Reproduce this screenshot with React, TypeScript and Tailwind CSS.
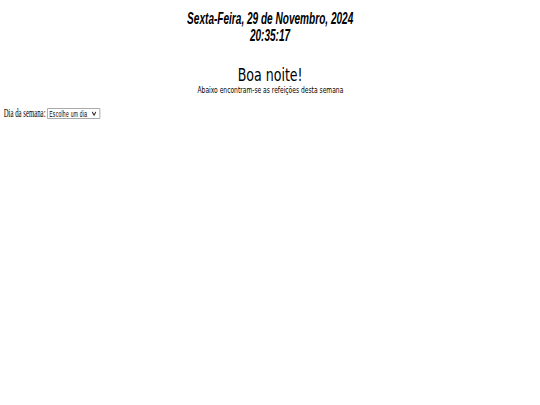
import React from "react";

export default function App() {
  return (
    <div className="min-h-screen w-full overflow-hidden bg-white text-black">
      <div className="pt-[10px] text-center font-['Liberation_Sans',Arial,sans-serif] text-[16.5px] leading-[16.5px] font-bold italic">
        <div>
          <span className="inline-block scale-x-[0.61] whitespace-nowrap">Sexta-Feira, 29 de Novembro, 2024</span>
        </div>
        <div>
          <span className="inline-block scale-x-[0.61] whitespace-nowrap">20:35:17</span>
        </div>
      </div>

      <div className="mt-[22px] text-center font-['DejaVu_Sans',sans-serif]">
        <div className="text-[17.5px] leading-[20px]">
          <span className="inline-block scale-x-[0.72] whitespace-nowrap">Boa noite!</span>
        </div>
        <div className="text-[8.5px] leading-[10px]">
          <span className="inline-block scale-x-[0.705] whitespace-nowrap">Abaixo encontram-se as refeições desta semana</span>
        </div>
      </div>

      <div className="mt-[12.6px] flex h-[11px] items-center origin-left scale-x-[0.53] pl-[7px]">
        <label className="block font-['Liberation_Serif','Times_New_Roman',serif] text-[12.8px] leading-[11px] whitespace-nowrap">
          Dia da semana:
        </label>
        <div className="relative ml-[3px] h-[11px] w-[100px] leading-[11px]">
          <select
            defaultValue=""
            className="block h-[11px] w-[100px] appearance-none rounded-[1px] border border-[#8f8f8f] bg-white py-0 pl-[3px] font-['Liberation_Sans',Arial,sans-serif] text-[9.5px] leading-[9px] tracking-[0.5px] text-black outline-none"
          >
            <option value="">Escolhe um dia</option>
            <option value="seg">Segunda-Feira</option>
            <option value="ter">Terça-Feira</option>
            <option value="qua">Quarta-Feira</option>
            <option value="qui">Quinta-Feira</option>
            <option value="sex">Sexta-Feira</option>
          </select>
          <svg
            className="pointer-events-none absolute right-[7px] top-[3.5px]"
            width="9"
            height="5"
            viewBox="0 0 9 5"
            fill="none"
          >
            <path d="M1 1 L4.5 4 L8 1" stroke="#222" strokeWidth="1.6" />
          </svg>
        </div>
      </div>
    </div>
  );
}
